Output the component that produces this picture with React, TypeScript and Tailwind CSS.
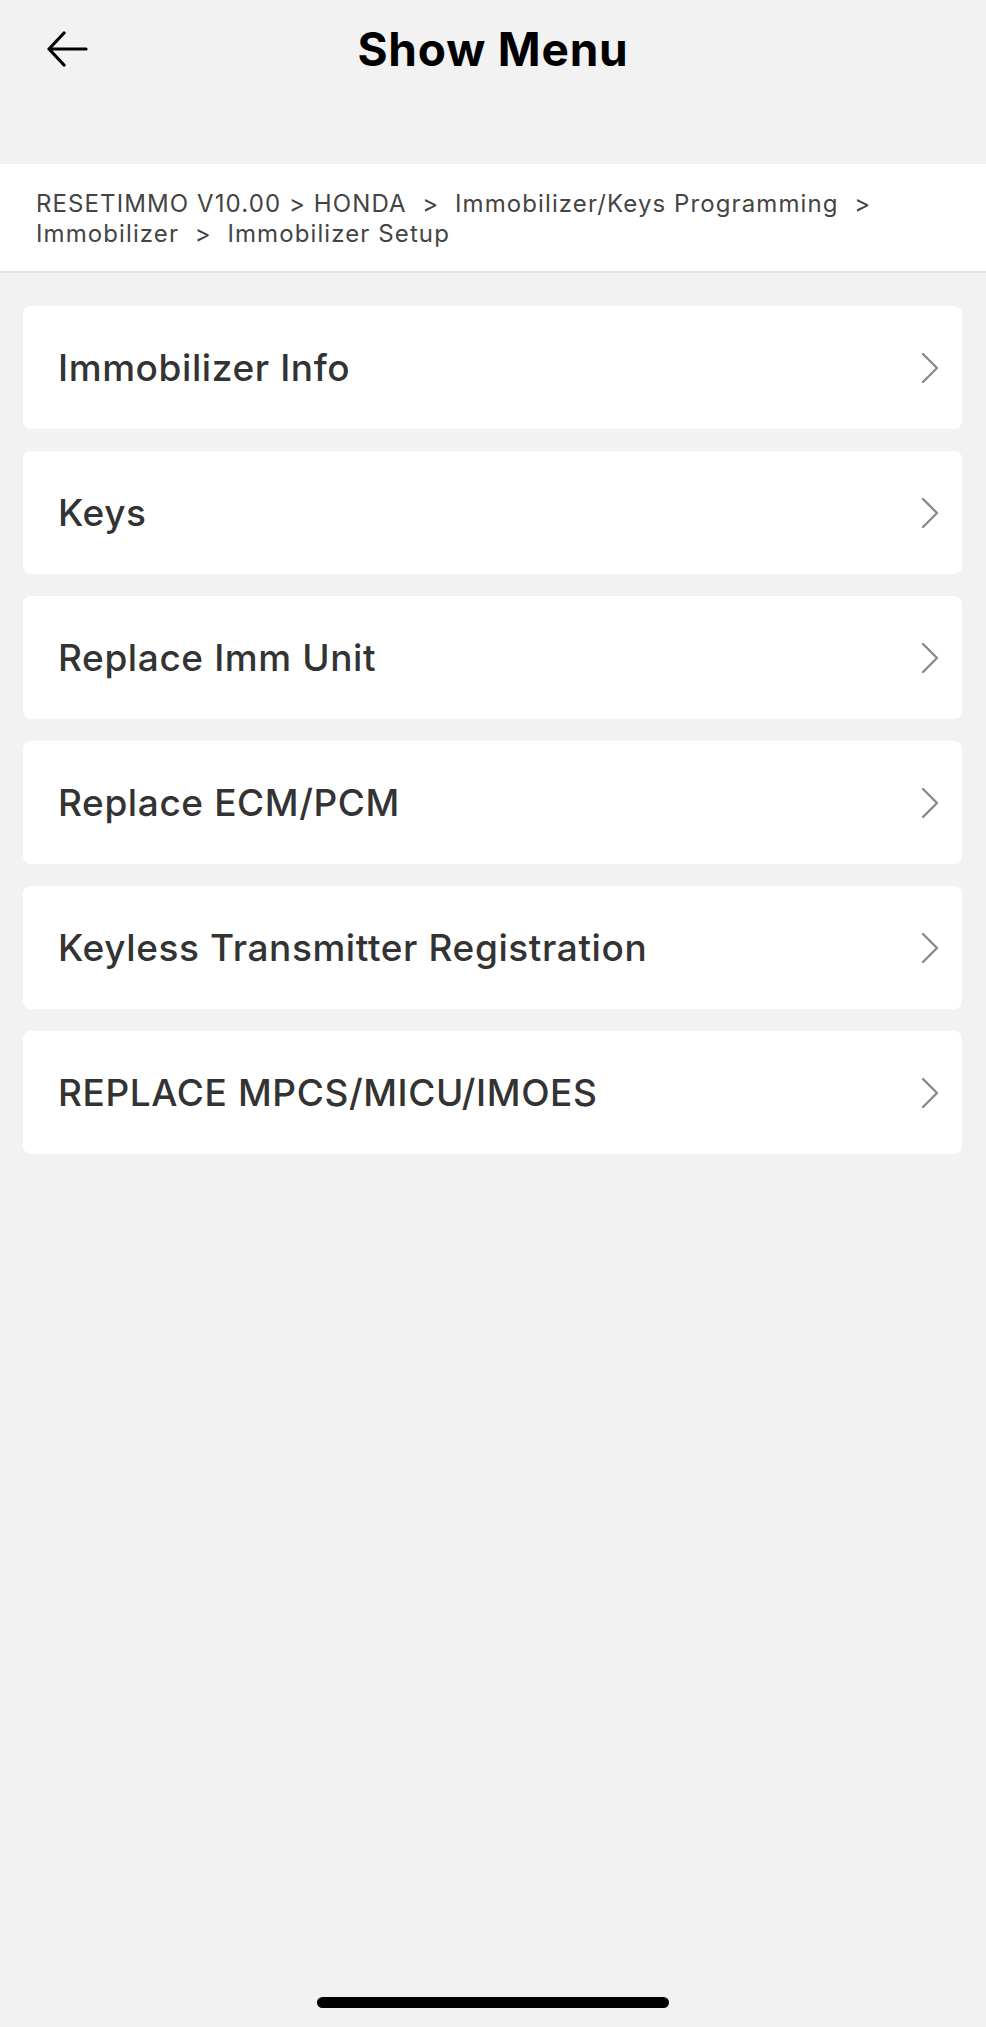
import React from "react";

const items = [
  "Immobilizer Info",
  "Keys",
  "Replace Imm Unit",
  "Replace ECM/PCM",
  "Keyless Transmitter Registration",
  "REPLACE MPCS/MICU/IMOES",
];

const BackArrow: React.FC = () => (
  <svg width="42" height="36" viewBox="0 0 42 36" fill="none">
    <path
      d="M40 18H3M18 2L3 18l15 16"
      stroke="#000"
      strokeWidth="3.2"
      strokeLinecap="round"
      strokeLinejoin="round"
    />
  </svg>
);

const Chevron: React.FC = () => (
  <svg width="18" height="32" viewBox="0 0 18 32" fill="none">
    <path
      d="M2 2l14 14L2 30"
      stroke="#8a8a8a"
      strokeWidth="2.4"
      strokeLinecap="round"
      strokeLinejoin="round"
    />
  </svg>
);

export default function App() {
  return (
    <div className="flex min-h-[2027px] w-full flex-col bg-[#f2f2f2] font-['Inter','Noto_Sans',sans-serif]">
      {/* top bar */}
      <div className="h-[164px]">
        <div className="relative flex h-[98px] items-center justify-center">
          <button className="absolute left-[46px] top-[31px]">
            <BackArrow />
          </button>
          <h1 className="text-[46px] font-bold tracking-[0.8px] text-black">
            Show Menu
          </h1>
        </div>
      </div>

      {/* breadcrumb */}
      <div className="border-b-2 border-[#e3e3e3] bg-white px-[36px] pb-[22px] pt-[25px]">
        <p className="text-[24px] leading-[30px] tracking-[1.1px] text-[#444]">
          RESETIMMO V10.00 &gt; HONDA &nbsp;&gt;&nbsp; Immobilizer/Keys
          Programming &nbsp;&gt;
          <br />
          Immobilizer &nbsp;&gt;&nbsp; Immobilizer Setup
        </p>
      </div>

      {/* menu list */}
      <div className="flex flex-col gap-[22px] pl-[23px] pr-[24px] pt-[33px]">
        {items.map((label) => (
          <div
            key={label}
            className="flex h-[123px] items-center justify-between rounded-[8px] bg-white pl-[35px] pr-[23px]"
          >
            <span className="text-[37px] font-medium tracking-[0.6px] text-[#333]">
              {label}
            </span>
            <Chevron />
          </div>
        ))}
      </div>

      <div className="flex-1" />

      {/* home indicator */}
      <div className="flex justify-center pb-[19px]">
        <div className="h-[11px] w-[352px] rounded-full bg-black" />
      </div>
    </div>
  );
}
